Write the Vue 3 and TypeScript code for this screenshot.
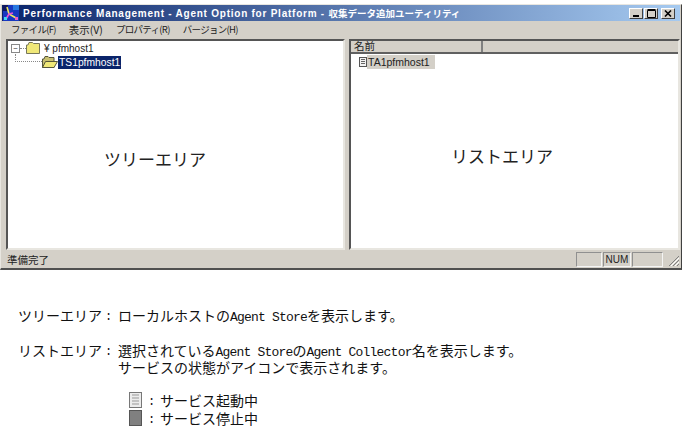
<script setup lang="ts">
const menus = [
  { label: 'ファイル(F)', kind: 'kana' },
  { label: '表示(V)', kind: 'kanji' },
  { label: 'プロパティ(R)', kind: 'kana' },
  { label: 'バージョン(H)', kind: 'kana' },
]
</script>

<template>
  <div class="page">
    <div class="window">
      <div class="titlebar">
        <svg class="appicon" width="16" height="16" viewBox="0 0 16 16">
          <rect width="16" height="16" fill="#1838c0" />
          <rect x="0" y="0" width="5" height="6" fill="#101860" />
          <rect x="10" y="0" width="6" height="5" fill="#2878e0" />
          <path d="M4 2 L6 9 L13 13" stroke="#f0e860" stroke-width="1.6" fill="none" />
          <path d="M3 14 L6 9 L10 8" stroke="#e850d8" stroke-width="1.6" fill="none" />
          <rect x="1" y="12" width="3" height="3" fill="#40d8f0" />
          <rect x="12" y="12" width="3" height="3" fill="#f060c0" />
        </svg>
        <span class="title">Performance Management - Agent Option for Platform - <span class="titlej">収集データ追加ユーティリティ</span></span>
        <div class="caption">
          <button class="cbtn"><svg width="9" height="8" viewBox="0 0 9 8"><rect x="1" y="6" width="6" height="2" fill="#000" /></svg></button>
          <button class="cbtn"><svg width="9" height="9" viewBox="0 0 9 9"><path d="M0.5 1.5H8.5V8.5H0.5Z M0.5 0.5H8.5" fill="none" stroke="#000" /></svg></button>
          <button class="cbtn close"><svg width="8" height="7" viewBox="0 0 8 7"><path d="M1 0.5L7 6.5M7 0.5L1 6.5" stroke="#000" stroke-width="1.6" /></svg></button>
        </div>
      </div>
      <div class="menubar">
        <span v-for="m in menus" :key="m.label" class="menu" :class="m.kind">{{ m.label }}</span>
      </div>
      <div class="panes">
        <div class="pane left">
          <div class="tree-row root">
            <span class="expander">−</span>
            <span class="dots-h"></span>
            <svg class="folder" width="14" height="12" viewBox="0 0 14 12">
              <path d="M0.5 3V11.5H13.5V1.5H7.5L6.5 0.5H3L2 3Z" fill="#f0e878" stroke="#77775a" />
            </svg>
            <span class="tree-text">¥ pfmhost1</span>
          </div>
          <div class="tree-row child">
            <span class="elbow"></span>
            <svg class="folder open" width="16" height="12" viewBox="0 0 16 12">
              <path d="M0.5 3V11.5H12V1.5H7L6 0.5H3L2 3Z" fill="#c8c070" stroke="#55553a" />
              <path d="M0.5 11.5L3.5 5.5H15.5L12 11.5Z" fill="#f0e878" stroke="#55553a" />
            </svg>
            <span class="selected">TS1pfmhost1</span>
          </div>
          <div class="big tree-big">ツリーエリア</div>
        </div>
        <div class="pane right">
          <div class="list-head">
            <div class="col c1">名前</div>
            <div class="col c2"></div>
          </div>
          <div class="list-row">
            <svg width="8" height="10" viewBox="0 0 8 10">
              <rect x="0.5" y="0.5" width="7" height="9" fill="#f2f2f2" stroke="#555" />
              <path d="M2 2.5H6M2 4.5H6M2 6.5H6" stroke="#666" />
            </svg>
            <span class="list-text">TA1pfmhost1</span>
          </div>
          <div class="big list-big">リストエリア</div>
        </div>
      </div>
      <div class="status">
        <span class="status-text">準備完了</span>
        <div class="cells">
          <span class="cell w1"></span>
          <span class="cell w2">NUM</span>
          <span class="cell w3"></span>
          <svg class="grip" width="12" height="12" viewBox="0 0 12 12">
            <path d="M11 1L1 11M11 5L5 11M11 9L9 11" stroke="#808080" stroke-width="1" />
            <path d="M11 3L3 11M11 7L7 11" stroke="#fff" stroke-width="1" />
          </svg>
        </div>
      </div>
    </div>

    <div class="notes">
      <div class="note first">
        <span class="label">ツリーエリア</span><span class="sep">:</span>
        <div class="body">ローカルホストの<span class="lat">Agent Store</span>を表示します。</div>
      </div>
      <div class="note second">
        <span class="label">リストエリア</span><span class="sep">:</span>
        <div class="body">
          <div class="line">選択されている<span class="lat">Agent Store</span>の<span class="lat">Agent Collector</span>名を表示します。</div>
          <div class="line">サービスの状態がアイコンで表示されます。</div>
        </div>
      </div>
      <div class="legend">
        <div class="legend-row">
          <svg width="13" height="16" viewBox="0 0 13 16">
            <rect x="0.5" y="0.5" width="12" height="15" fill="#ececec" stroke="#777" />
            <path d="M3 3H10M3 6H10M3 9H10M3 12H10" stroke="#999" />
          </svg>
          <span class="legend-sep">:</span><span>サービス起動中</span>
        </div>
        <div class="legend-row">
          <svg width="13" height="16" viewBox="0 0 13 16">
            <rect x="0.5" y="0.5" width="12" height="15" fill="#808080" stroke="#555" />
          </svg>
          <span class="legend-sep">:</span><span>サービス停止中</span>
        </div>
      </div>
    </div>
  </div>
</template>

<style>
html, body { background: #fff; margin: 0; }
</style>

<style scoped>
.page {
  width: 685px;
  height: 431px;
  overflow: hidden;
  padding-top: 4px;
  box-sizing: border-box;
  font-family: "Noto Sans CJK JP", sans-serif;
  color: #222;
  background: #fff;
}
.window {
  width: 682px;
  height: 266px;
  box-sizing: border-box;
  background: #d4d0c8;
  border-top: 1px solid #e8e6e0;
  border-left: 1px solid #e8e6e0;
  border-right: 1px solid #404040;
  border-bottom: 2px solid #505050;
  padding: 0 1px;
  display: flex;
  flex-direction: column;
}
.titlebar {
  height: 16px;
  flex: none;
  display: flex;
  align-items: center;
  background: linear-gradient(90deg, #0a246a, #a6caf0);
  padding-left: 1px;
}
.appicon { flex: none; margin-right: 4px; }
.title {
  font-family: "Liberation Sans", sans-serif;
  font-weight: 700;
  font-size: 10px;
  letter-spacing: 0.76px;
  color: #fff;
  white-space: nowrap;
  flex: 1;
  line-height: 16px;
}
.titlej {
  font-family: "Noto Sans CJK JP", sans-serif;
  font-size: 9.5px;
  letter-spacing: 0;
  font-weight: 700;
}
.caption { display: flex; gap: 1px; margin-right: 5px; }
.cbtn {
  width: 14px;
  height: 11px;
  padding: 0;
  background: #d4d0c8;
  border: 1px solid;
  border-color: #fff #404040 #404040 #fff;
  display: flex;
  align-items: center;
  justify-content: center;
}
.close { margin-left: 2px; }
.menubar {
  height: 18px;
  flex: none;
  display: flex;
  align-items: center;
  gap: 13px;
  padding-left: 9px;
  color: #222;
  padding-bottom: 2px;
  box-sizing: border-box;
}
.menu { white-space: nowrap; }
.kana { font-size: 9.5px; letter-spacing: -0.7px; }
.kanji { font-size: 10.5px; }
.panes {
  height: 211px;
  flex: none;
  display: flex;
  gap: 4px;
  padding-left: 4px;
}
.pane {
  background: #fff;
  box-sizing: border-box;
  border: 2px solid;
  border-color: #555 #e8e6e0 #e8e6e0 #555;
  position: relative;
}
.left { width: 340px; padding: 0 0 0 3px; }
.right { width: 332px; }
.tree-row { display: flex; align-items: center; height: 14px; }
.expander {
  width: 7px;
  height: 7px;
  border: 1px solid #888;
  font-size: 8px;
  line-height: 6px;
  text-align: center;
  color: #333;
  flex: none;
}
.dots-h { width: 6px; border-top: 1px dotted #888; flex: none; }
.folder { flex: none; margin-right: 4px; }
.tree-text { font-size: 10px; font-family: "Liberation Sans", "Noto Sans CJK JP", sans-serif; color: #222; }
.child { padding-left: 4px; }
.elbow {
  width: 27px;
  height: 8px;
  border-left: 1px dotted #888;
  border-bottom: 1px dotted #888;
  margin-top: -8px;
  box-sizing: border-box;
  flex: none;
}
.open { margin-right: 0; }
.selected {
  background: #0a246a;
  color: #fff;
  font-size: 10.3px;
  font-family: "Liberation Sans", sans-serif;
  line-height: 13px;
  padding: 0 1px;
}
.big {
  position: absolute;
  font-size: 17px;
  color: #222;
  white-space: nowrap;
  line-height: 20px;
}
.tree-big { left: 96px; top: 108px; }
.list-big { left: 100px; top: 105px; }
.list-head { display: flex; height: 13px; box-sizing: border-box; background: #d4d0c8; border-bottom: 2px solid #606060; }
.col {
  font-size: 10.5px;
  line-height: 10px;
  box-sizing: border-box;
  padding-left: 3px;
}
.c1 { width: 132px; border-right: 2px solid #808080; }
.c2 { flex: 1; }
.list-row { display: flex; align-items: center; padding: 1px 0 0 8px; height: 14px; box-sizing: border-box; }
.list-text {
  background: #d4d0c8;
  font-size: 10.5px;
  font-family: "Liberation Sans", sans-serif;
  line-height: 14px;
  padding-right: 5px;
  padding-left: 1px;
  color: #222;
}
.status {
  height: 18px;
  flex: none;
  display: flex;
  align-items: center;
  justify-content: space-between;
  padding-left: 5px;
}
.status-text { font-size: 10.5px; color: #222; }
.cells { display: flex; align-items: center; gap: 1px; }
.cell {
  height: 15px;
  box-sizing: border-box;
  border: 1px solid;
  border-color: #909090 #f4f4f4 #f4f4f4 #909090;
  font-family: "Liberation Sans", sans-serif;
  font-size: 10px;
  line-height: 13px;
  text-align: center;
  color: #222;
}
.w1 { width: 26px; }
.w2 { width: 28px; }
.w3 { width: 31px; }
.grip { margin-left: 4px; margin-top: 3px; }
.notes {
  font-size: 14px;
  color: #111;
  padding-left: 18px;
  padding-top: 37px;
}
.note { display: flex; white-space: nowrap; line-height: 17px; }
.first { height: 18px; }
.second { margin-top: 17px; height: 35px; }
.label { width: 84px; flex: none; }
.sep {
  width: 16px;
  flex: none;
  padding: 3px 0 0 3px;
  box-sizing: border-box;
  font-family: "Liberation Mono", monospace;
  font-size: 12px;
  line-height: 14px;
}
.body { flex: none; }
.line { height: 17px; line-height: 17px; }
.lat { font-family: "Liberation Mono", monospace; font-size: 13px; line-height: 13px; letter-spacing: -0.8px; }
.legend { padding-left: 111px; padding-top: 14px; }
.legend-row { display: flex; align-items: center; height: 18px; }
.legend-sep {
  width: 18px;
  flex: none;
  padding: 3px 0 0 6px;
  box-sizing: border-box;
  font-family: "Liberation Mono", monospace;
  font-size: 12px;
  line-height: 14px;
}
</style>
